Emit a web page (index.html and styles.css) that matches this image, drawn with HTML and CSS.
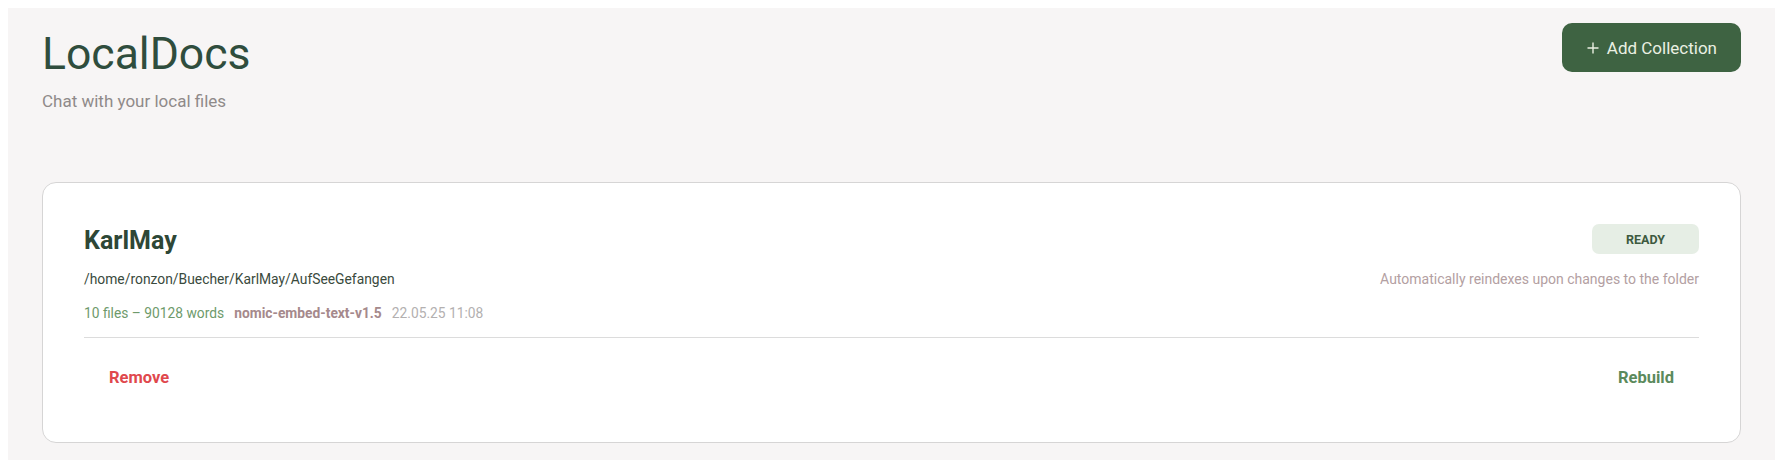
FILE: index.html
```html
<!DOCTYPE html>
<html lang="en">
<head>
<meta charset="utf-8">
<title>LocalDocs</title>
<link rel="stylesheet" href="styles.css">
</head>
<body>
<div class="app">
  <header class="header">
    <div class="heading">
      <h1 class="title">LocalDocs</h1>
      <p class="subtitle">Chat with your local files</p>
    </div>
    <button class="add-btn" type="button">
      <svg class="plus" width="12" height="12" viewBox="0 0 12 12" aria-hidden="true"><path d="M6 0.5V11.5M0.5 6H11.5" stroke="currentColor" stroke-width="1.4" fill="none"/></svg>
      <span>Add Collection</span>
    </button>
  </header>

  <section class="card">
    <div class="card-top">
      <h2 class="name">KarlMay</h2>
      <span class="badge">READY</span>
    </div>
    <div class="card-row">
      <span class="path">/home/ronzon/Buecher/KarlMay/AufSeeGefangen</span>
      <span class="auto">Automatically reindexes upon changes to the folder</span>
    </div>
    <div class="meta">
      <span class="count">10 files – 90128 words</span>
      <span class="model">nomic-embed-text-v1.5</span>
      <span class="date">22.05.25 11:08</span>
    </div>
    <div class="divider"></div>
    <div class="actions">
      <button class="text-btn remove" type="button">Remove</button>
      <button class="text-btn rebuild" type="button">Rebuild</button>
    </div>
  </section>
</div>
</body>
</html>
```

FILE: styles.css
```css
* { box-sizing: border-box; }

html, body {
  margin: 0;
  padding: 0;
  background: #ffffff;
}

body {
  padding: 8px;
  font-family: Roboto, "Noto Sans", "Liberation Sans", sans-serif;
}

.app {
  height: 452px;
  background: #f7f5f5;
  padding: 15px 34px 0 34px;
}

.header {
  display: flex;
  justify-content: space-between;
  align-items: flex-start;
}

.title {
  margin: 0;
  font-size: 44.5px;
  line-height: 63px;
  font-weight: 400;
  color: #2f4d3d;
}

.subtitle {
  margin: 4px 0 0 0;
  font-size: 17px;
  line-height: 22px;
  color: #8f8a89;
}

.add-btn {
  display: flex;
  align-items: center;
  gap: 8px;
  height: 49px;
  margin-top: 0;
  padding: 0 24px 0 25px;
  border: none;
  border-radius: 10px;
  background: #3e6342;
  color: #eaf0e2;
  font-family: inherit;
  font-size: 17px;
  font-weight: 400;
}

.plus { display: block; }

.card {
  margin-top: 70px;
  background: #ffffff;
  border: 1.5px solid #d6d5d5;
  border-radius: 14px;
  padding: 41px 41px 0 41px;
  height: 261px;
}

.card-top {
  display: flex;
  justify-content: space-between;
  align-items: flex-start;
}

.name {
  margin: 0;
  font-size: 25px;
  line-height: 34px;
  font-weight: 700;
  color: #2e4736;
}

.badge {
  display: flex;
  align-items: center;
  justify-content: center;
  width: 107px;
  height: 30px;
  border-radius: 7px;
  background: #e6eee5;
  color: #3d5a40;
  font-size: 12.5px;
  font-weight: 700;
}

.card-row {
  display: flex;
  justify-content: space-between;
  align-items: baseline;
  margin-top: 11px;
}

.path {
  font-size: 13.85px;
  line-height: 20px;
  color: #3a4a3d;
}

.auto {
  font-size: 14px;
  line-height: 20px;
  color: #b3a0a2;
}

.meta {
  display: flex;
  align-items: baseline;
  gap: 10px;
  margin-top: 14px;
  font-size: 13.8px;
  line-height: 20px;
}

.count { color: #6e9a6b; }
.model { color: #a5898c; font-weight: 700; }
.date { color: #b3b0b0; }

.divider {
  height: 1px;
  margin-top: 14px;
  background: #dcdcdc;
}

.actions {
  display: flex;
  justify-content: space-between;
  margin-top: 20px;
}

.text-btn {
  border: none;
  background: transparent;
  padding: 10px 25px;
  font-family: inherit;
  font-size: 16.5px;
  line-height: 20px;
  font-weight: 700;
}

.remove { color: #e0484d; }
.rebuild { color: #5b8a5c; }
```
